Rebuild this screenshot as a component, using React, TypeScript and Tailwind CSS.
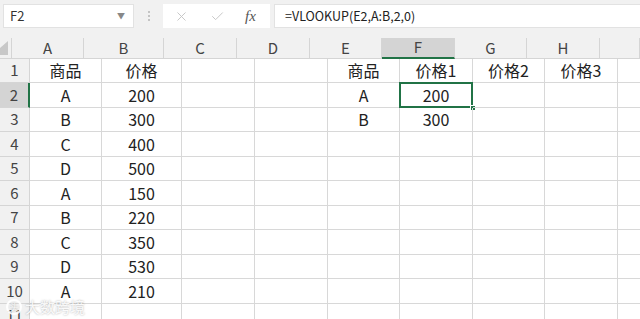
import React from 'react'
import { X, Check } from 'lucide-react'

const cols = [
  { k: 'A', w: 'w-[72px]' },
  { k: 'B', w: 'w-[80px]' },
  { k: 'C', w: 'w-[73px]' },
  { k: 'D', w: 'w-[73px]' },
  { k: 'E', w: 'w-[72px]' },
  { k: 'F', w: 'w-[73px]' },
  { k: 'G', w: 'w-[72px]' },
  { k: 'H', w: 'w-[73px]' },
  { k: '', w: 'w-[40px]' },
]

const rows: Record<string, string>[] = [
  { A: '商品', B: '价格', E: '商品', F: '价格1', G: '价格2', H: '价格3' },
  { A: 'A', B: '200', E: 'A', F: '200' },
  { A: 'B', B: '300', E: 'B', F: '300' },
  { A: 'C', B: '400' },
  { A: 'D', B: '500' },
  { A: 'A', B: '150' },
  { A: 'B', B: '220' },
  { A: 'C', B: '350' },
  { A: 'D', B: '530' },
  { A: 'A', B: '210' },
  {},
]

function App() {
  return (
    <div className="relative w-[640px] h-[319px] overflow-hidden bg-white text-[#222] font-['Noto_Sans_CJK_SC','Noto_Sans',sans-serif]">
      {/* formula bar */}
      <div className="h-[38px] bg-[#f1f1f1] flex items-start pt-[4px] pl-[3px]">
        <div className="w-[131px] h-[24px] bg-white border border-[#e2e2e2] flex items-center justify-between px-[6px] text-[13px] text-[#333]">
          <span>F2</span>
          <span className="text-[#888] text-[8px] mr-[2px]">▼</span>
        </div>
        <div className="w-[29px] h-[24px] flex flex-col items-center justify-center gap-[2px]">
          <span className="w-[2px] h-[2px] bg-[#b5b5b5] rounded-full" />
          <span className="w-[2px] h-[2px] bg-[#b5b5b5] rounded-full" />
          <span className="w-[2px] h-[2px] bg-[#b5b5b5] rounded-full" />
        </div>
        <div className="w-[107px] h-[24px] bg-white flex items-center pl-[11px]">
          <X className="w-[15px] h-[15px] text-[#c4c4c4]" strokeWidth={1.5} />
          <Check className="w-[15px] h-[15px] text-[#c4c4c4] ml-[21px]" strokeWidth={1.5} />
          <span className="ml-[20px] italic text-[15px] text-[#555] font-['Liberation_Serif',serif]">fx</span>
        </div>
        <div className="ml-[4px] flex-1 h-[24px] bg-white border border-[#e2e2e2] border-r-0 flex items-center pl-[10px] text-[12.5px] text-[#222]">
          =VLOOKUP(E2,A:B,2,0)
        </div>
      </div>

      {/* column headers */}
      <div className="flex h-[20.5px] bg-[#f1f1f1]">
        <div className="w-[30px] relative border-r border-[#d5d5d5] border-b">
          <div className="absolute right-[3px] bottom-[3px] w-0 h-0 border-l-[16px] border-l-transparent border-b-[14px] border-b-[#c8c8c8]" />
        </div>
        {cols.map((c) => (
          <div
            key={c.k}
            className={`${c.w} shrink-0 flex items-center justify-center text-[15px] text-[#444] ${
              c.k === 'F'
                ? 'bg-[#d4d4d4] border-b-2 border-b-[#217346]'
                : 'border-b border-b-[#d5d5d5]'
            } border-r border-r-[#d5d5d5]`}
          >
            {c.k}
          </div>
        ))}
      </div>

      {/* rows */}
      {rows.map((r, i) => (
        <div key={i} className="flex h-[24.5px]">
          <div
            className={`w-[30px] shrink-0 flex items-center justify-center text-[15px] text-[#444] border-b border-b-[#d5d5d5] ${
              i === 1 ? 'bg-[#d4d4d4] border-r-2 border-r-[#217346]' : 'bg-[#f1f1f1] border-r border-r-[#d5d5d5]'
            }`}
          >
            {i + 1}
          </div>
          {cols.map((c) => (
            <div
              key={c.k}
              className={`${c.w} shrink-0 relative flex items-center justify-center text-[16px] border-r border-b border-[#d8d8d8]`}
            >
              {r[c.k] ?? ''}
              {i === 1 && c.k === 'F' && (
                <>
                  <div className="absolute -left-px -top-px -right-px -bottom-px border-2 border-[#217346]" />
                  <div className="absolute -right-[4px] -bottom-[4px] w-[6px] h-[6px] bg-[#217346] border border-white" />
                </>
              )}
            </div>
          ))}
        </div>
      ))}

      {/* watermark */}
      <div className="absolute left-[6px] top-[296px] flex items-center gap-[3px] text-white/90 text-[15px] [text-shadow:0_0_2px_rgba(0,0,0,0.35)]">
        <span className="w-[16px] h-[16px] rounded-full border-2 border-white/90 text-[9px] flex items-center justify-center">头</span>
        <span>大数跨境</span>
      </div>
    </div>
  )
}

export default App
